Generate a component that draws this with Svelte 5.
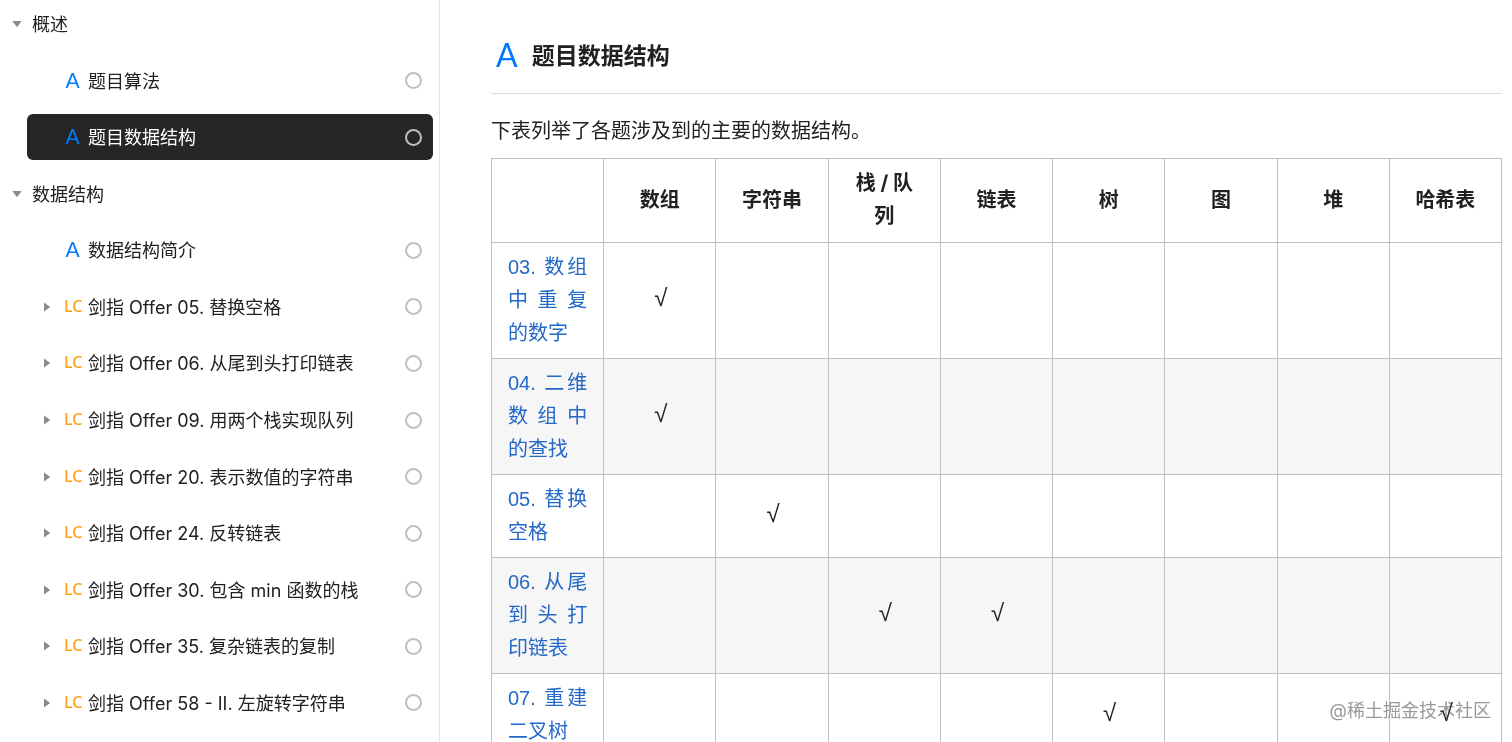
<script>
  const sections = [
    {
      title: '概述',
      items: [
        { tag: 'A', name: '题目算法' },
        { tag: 'A', name: '题目数据结构', active: true }
      ]
    },
    {
      title: '数据结构',
      items: [
        { tag: 'A', name: '数据结构简介' },
        { tag: 'LC', name: '剑指 Offer 05. 替换空格' },
        { tag: 'LC', name: '剑指 Offer 06. 从尾到头打印链表' },
        { tag: 'LC', name: '剑指 Offer 09. 用两个栈实现队列' },
        { tag: 'LC', name: '剑指 Offer 20. 表示数值的字符串' },
        { tag: 'LC', name: '剑指 Offer 24. 反转链表' },
        { tag: 'LC', name: '剑指 Offer 30. 包含 min 函数的栈' },
        { tag: 'LC', name: '剑指 Offer 35. 复杂链表的复制' },
        { tag: 'LC', name: '剑指 Offer 58 - II. 左旋转字符串' }
      ]
    }
  ]

  const columns = ['数组', '字符串', '栈 / 队列', '链表', '树', '图', '堆', '哈希表']

  const problems = [
    { name: '03. 数组中重复的数字', uses: ['数组'] },
    { name: '04. 二维数组中的查找', uses: ['数组'] },
    { name: '05. 替换空格', uses: ['字符串'] },
    { name: '06. 从尾到头打印链表', uses: ['栈 / 队列', '链表'] },
    { name: '07. 重建二叉树', uses: ['树', '哈希表'] }
  ]
</script>

<div class="page">
  <nav class="sidebar">
    {#each sections as section}
      <button class="row section">
        <svg class="arrow" viewBox="0 0 10 6" width="10" height="6" aria-hidden="true">
          <path d="M0.4 0h9.2L5.6 5.6q-.6.6-1.2 0z" />
        </svg>
        <span class="name">{section.title}</span>
      </button>
      {#each section.items as item}
        <a class="row item" class:active={item.active} href="#top">
          <span class="toggle">
            {#if item.tag === 'LC'}
              <svg class="arrow" viewBox="0 0 6 10" width="6" height="10" aria-hidden="true">
                <path d="M0 0.4v9.2L5.6 5.6q.6-.6 0-1.2z" />
              </svg>
            {/if}
          </span>
          <span class="tag" class:lc={item.tag === 'LC'}>{item.tag}</span>
          <span class="name">{item.name}</span>
          <span class="circle"></span>
        </a>
      {/each}
    {/each}
  </nav>

  <main id="top">
    <h1><span class="logo">A</span><span>题目数据结构</span></h1>
    <p>下表列举了各题涉及到的主要的数据结构。</p>
    <table>
      <thead>
        <tr>
          <th></th>
          {#each columns as column}
            <th>{column}</th>
          {/each}
        </tr>
      </thead>
      <tbody>
        {#each problems as problem}
          <tr>
            <td class="problem"><a href="#top">{problem.name}</a></td>
            {#each columns as column}
              <td class="mark">{problem.uses.includes(column) ? '√' : ''}</td>
            {/each}
          </tr>
        {/each}
      </tbody>
    </table>
  </main>

  <div class="watermark">@稀土掘金技术社区</div>
</div>

<style>
  :global(body) {
    margin: 0;
    background: #fff;
  }

  .page {
    position: relative;
    display: flex;
    height: 100vh;
    overflow: hidden;
    background: #fff;
    color: #212121;
    font-family: Inter, 'Noto Sans CJK SC', sans-serif;
  }

  .sidebar {
    box-sizing: border-box;
    flex: 0 0 440px;
    display: flex;
    flex-direction: column;
    justify-content: space-between;
    padding: 1px 6px 16px 0;
    border-right: 1px solid #e5e5e5;
  }

  .row {
    display: flex;
    align-items: center;
    height: 46px;
    color: #212121;
    font-family: inherit;
    font-size: 18px;
    line-height: 24px;
    text-align: left;
    text-decoration: none;
  }

  .section {
    gap: 10px;
    padding: 0 12px;
    border: 0;
    background: none;
    cursor: pointer;
  }

  .item {
    box-sizing: border-box;
    margin-left: 27px;
    padding: 0 11px 0 17px;
    border-radius: 6px;
  }

  .arrow {
    display: block;
    fill: #8c8c8c;
  }

  .toggle {
    width: 20px;
  }

  .tag {
    width: 17px;
    margin-right: 7px;
    padding-bottom: 2px;
    color: #007aff;
    font-family: Lato, sans-serif;
    font-size: 21px;
    text-align: center;
  }

  .tag.lc {
    color: #ffa116;
    font-family: 'Noto Sans', sans-serif;
    font-size: 16px;
    font-weight: 500;
  }

  .name {
    flex: 1;
    padding-top: 2px;
    white-space: nowrap;
  }

  .circle {
    box-sizing: border-box;
    width: 17px;
    height: 17px;
    border: 2px solid #bfbfbf;
    border-radius: 50%;
  }

  .item.active {
    background: #262626;
    color: #fff;
  }

  main {
    flex: 1;
    min-width: 0;
    padding: 24px 10px 0 51px;
  }

  h1 {
    box-sizing: border-box;
    display: flex;
    align-items: center;
    gap: 14px;
    height: 70px;
    margin: 0 0 20px;
    padding: 0 5px 9px;
    border-bottom: 1px solid #dedede;
    font-size: 23px;
    font-weight: 700;
  }

  .logo {
    color: #007aff;
    font-family: Lato, sans-serif;
    font-size: 32px;
    font-weight: 400;
  }

  p {
    margin: 0;
    padding: 1px 0 10px;
    font-size: 20px;
    line-height: 33px;
  }

  table {
    width: 100%;
    table-layout: fixed;
    border-collapse: collapse;
    font-size: 20px;
    line-height: 33px;
  }

  th,
  td {
    padding: 8px 16px;
    border: 1px solid #bfbfbf;
    text-align: center;
    vertical-align: middle;
  }

  th {
    padding: 8px 18px 9px;
    font-weight: 700;
  }

  tbody tr:nth-child(even) {
    background: #f6f6f6;
  }

  td.problem {
    font-family: 'Liberation Sans', 'Noto Sans CJK SC', sans-serif;
    text-align: justify;
  }

  .problem a {
    color: #2468c8;
    text-decoration: none;
  }

  td.mark {
    padding: 5px 15px 11px 17px;
    font-family: 'Liberation Sans', sans-serif;
    font-size: 24px;
  }

  .watermark {
    position: absolute;
    right: 21px;
    bottom: 18px;
    color: #999;
    font-size: 18px;
    line-height: 27px;
    mix-blend-mode: darken;
    pointer-events: none;
  }
</style>
